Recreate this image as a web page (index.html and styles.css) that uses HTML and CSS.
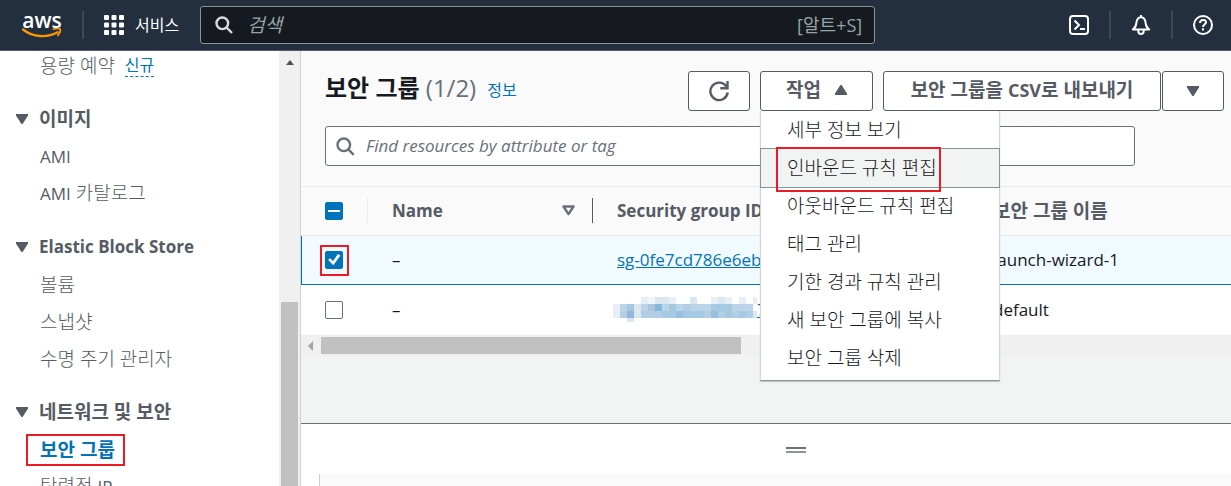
FILE: index.html
```html
<!DOCTYPE html>
<html lang="ko">
<head>
<meta charset="utf-8">
<title>보안 그룹 | EC2</title>
<link rel="stylesheet" href="styles.css">
</head>
<body>
<header class="topbar">
  <a class="logo" href="#" aria-label="AWS">
    <span class="logo-text">aws</span>
    <svg class="logo-smile" viewBox="0 0 40 10" aria-hidden="true"><path d="M1 1.5C11 9.5 25 10 35.5 4.2" fill="none" stroke="#ff9900" stroke-width="2.4" stroke-linecap="round"/><path d="M31.5 1.2C34.5.4 37.4.4 38.2 1.2c.7 1-.3 4-2.400 6.200" fill="none" stroke="#ff9900" stroke-width="1.700" stroke-linecap="round"/></svg>
  </a>
  <span class="divider"></span>
  <button class="services" type="button">
    <svg width="20" height="20" viewBox="0 0 20 20" fill="#fff" aria-hidden="true"><rect width="5" height="5" rx="1"/><rect x="7.500" width="5" height="5" rx="1"/><rect x="15" width="5" height="5" rx="1"/><rect y="7.500" width="5" height="5" rx="1"/><rect x="7.500" y="7.500" width="5" height="5" rx="1"/><rect x="15" y="7.500" width="5" height="5" rx="1"/><rect y="15" width="5" height="5" rx="1"/><rect x="7.500" y="15" width="5" height="5" rx="1"/><rect x="15" y="15" width="5" height="5" rx="1"/></svg>
    <span>서비스</span>
  </button>
  <label class="global-search">
    <svg width="18" height="18" viewBox="0 0 18 18" fill="none" stroke="#d5dbdb" stroke-width="2.400" aria-hidden="true"><circle cx="7.300" cy="7.300" r="5.800"/><path d="M11.500 11.500l5.500 5.500"/></svg>
    <input type="text" placeholder="검색" aria-label="검색">
    <span class="shortcut">[알트+S]</span>
  </label>
  <nav class="tools">
    <button type="button" aria-label="CloudShell"><svg width="20" height="20" viewBox="0 0 20 20" fill="none" stroke="#fff" stroke-width="2" aria-hidden="true"><rect x="1" y="1" width="18" height="18" rx="3"/><path d="M5.500 5.500l4.500 4.500-4.500 4.500M11 14h5"/></svg></button>
    <span class="divider"></span>
    <button type="button" aria-label="알림"><svg width="20" height="20" viewBox="0 0 20 20" fill="none" stroke="#fff" stroke-width="2" stroke-linejoin="round" aria-hidden="true"><path d="M10 0v2M1.800 14.500h16.400c-2.700-2-3.200-3.500-3.500-6.200C14.300 4.500 12.800 2.300 10 2.300S5.700 4.500 5.300 8.300C5 11 4.500 12.500 1.800 14.500zM7.300 15v1.300a2.700 2.700 0 0 0 5.400 0V15"/></svg></button>
    <span class="divider"></span>
    <button type="button" aria-label="도움말"><svg width="20" height="20" viewBox="0 0 20 20" fill="none" stroke="#fff" stroke-width="2" aria-hidden="true"><circle cx="10" cy="10" r="9"/><path d="M7 8c0-4 6-4 6-.8 0 2.200-3 2.200-3 4.800M10 13.300v2.200"/></svg></button>
  </nav>
</header>

<div class="shell">
  <aside class="sidebar">
    <nav class="menu-list">
      <ul class="first">
        <li><a href="#">용량 예약</a><a class="new" href="#">신규</a></li>
      </ul>
      <section>
        <h2><span class="tri"></span>이미지</h2>
        <ul>
          <li><a class="latin" href="#">AMI</a></li>
          <li><a href="#"><span class="latin">AMI</span> 카탈로그</a></li>
        </ul>
      </section>
      <section>
        <h2><span class="tri"></span><span class="latin">Elastic Block Store</span></h2>
        <ul>
          <li><a href="#">볼륨</a></li>
          <li><a href="#">스냅샷</a></li>
          <li><a href="#">수명 주기 관리자</a></li>
        </ul>
      </section>
      <section>
        <h2><span class="tri"></span>네트워크 및 보안</h2>
        <ul>
          <li><a class="current marked" href="#">보안 그룹</a></li>
          <li><a href="#">탄력적 <span class="latin">IP</span></a></li>
        </ul>
      </section>
    </nav>
    <div class="vscroll"><span class="vscroll-up"></span><span class="vscroll-thumb"></span></div>
  </aside>

  <main class="content">
    <section class="listing">
      <div class="list-head">
        <div class="title-row">
          <h1>보안 그룹 <span class="count">(1/2)</span></h1>
          <a class="info" href="#">정보</a>
          <div class="actions">
            <button class="btn icon-btn" type="button" aria-label="새로 고침"><svg width="22" height="22" viewBox="0 0 22 22" fill="none" stroke="#545b64" stroke-width="2.400" aria-hidden="true"><path d="M18.300 6.500A8.700 8.700 0 1 0 19.700 12.500M19.500 1v7.200h-7.200"/></svg></button>
            <div class="dropdown">
              <button class="btn action-btn" type="button" aria-expanded="true">작업 <span class="tri up"></span></button>
              <ul class="dropdown-menu" role="menu">
                <li role="menuitem">세부 정보 보기</li>
                <li role="menuitem" class="active"><span class="marked">인바운드 규칙 편집</span></li>
                <li role="menuitem">아웃바운드 규칙 편집</li>
                <li role="menuitem">태그 관리</li>
                <li role="menuitem">기한 경과 규칙 관리</li>
                <li role="menuitem">새 보안 그룹에 복사</li>
                <li role="menuitem">보안 그룹 삭제</li>
              </ul>
            </div>
            <div class="split">
              <button class="btn export-btn" type="button"><span>보안 그룹을 <span class="export-format">CSV</span>로 내보내기</span></button>
              <button class="btn icon-btn" type="button" aria-label="내보내기 옵션"><span class="tri"></span></button>
            </div>
          </div>
        </div>
        <label class="filter">
          <svg width="19" height="19" viewBox="0 0 19 19" fill="none" stroke="#687078" stroke-width="2.400" aria-hidden="true"><circle cx="7.800" cy="7.800" r="6.300"/><path d="M12.300 12.300l5.500 5.500"/></svg>
          <input type="text" placeholder="Find resources by attribute or tag" aria-label="Find resources by attribute or tag">
        </label>
      </div>
      <table class="grid">
        <colgroup><col class="c-check"><col class="c-name"><col class="c-id"><col></colgroup>
        <thead>
          <tr>
            <th class="check"><span class="cell"><input class="box mixed" type="checkbox" aria-label="모두 선택"></span></th>
            <th><span class="cell">Name <svg width="13" height="11" viewBox="0 0 13 11" fill="none" stroke="#687078" stroke-width="2.400" stroke-linejoin="round" aria-hidden="true"><path d="M1.500 1.500h10l-5 7.600z"/></svg></span></th>
            <th><span class="cell">Security group ID</span></th>
            <th><span class="cell korean">보안 그룹 이름</span></th>
          </tr>
        </thead>
        <tbody>
          <tr class="selected">
            <td class="check"><span class="marked"><input class="box" type="checkbox" checked aria-label="launch-wizard-1"></span></td>
            <td>–</td>
            <td><a href="#">sg-0fe7cd786e6eb</a></td>
            <td>launch-wizard-1</td>
          </tr>
          <tr>
            <td class="check"><input class="box" type="checkbox" aria-label="default"></td>
            <td>–</td>
            <td><div class="masked">
              <svg width="144" height="25" viewBox="0 0 144 25" shape-rendering="crispEdges" aria-hidden="true">
                <g fill="#e7eef6"><path d="M0 7h7v14H0zM28 0h7v7h-7zM56 0h7v7h-7zM98 0h7v7h-7zM112 0h7v7h-7zM126 0h7v7h-7zM140 0h4v7h-4z"/></g>
                <g fill="#d9e7f1"><path d="M42 0h14v7H42zM77 0h7v7h-7zM105 0h7v7h-7zM21 7h7v14h-7zM14 21h7v4h-7zM140 14h4v7h-4z"/></g>
                <path fill="#f0f5fa" d="M35 0h7v7h-7z"/>
                <path fill="#bbd4ea" d="M7 7h7v7H7zM28 7h7v7h-7zM49 7h7v7h-7zM63 7h7v7h-7zM77 7h21v7H77zM119 7h21v7h-21z"/>
                <path fill="#a5c8e3" d="M14 7h7v7h-7zM56 7h7v7h-7zM98 7h21v7H98zM49 14h14v7H49zM70 14h21v7H70zM112 14h7v7h-7zM126 14h7v7h-7z"/>
                <path fill="#b1cee5" d="M7 14h7v7H7zM28 14h21v7H28zM91 14h7v7h-7zM105 14h7v7h-7zM119 14h7v7h-7zM133 14h7v7h-7zM70 7h7v7h-7z"/>
                <path fill="#b1c4df" d="M35 7h7v7h-7z"/>
                <path fill="#84b7dc" d="M42 7h7v7h-7z"/>
                <path fill="#92b5d9" d="M14 14h7v7h-7z"/>
                <path fill="#98c0de" d="M63 14h7v7h-7zM98 14h7v7h-7z"/>
              </svg><a href="#">7</a></div></td>
            <td>default</td>
          </tr>
        </tbody>
      </table>
      <div class="hscroll"><span class="hscroll-left"></span><span class="hscroll-thumb"></span></div>
    </section>
    <section class="split-panel">
      <span class="handle"></span>
      <div class="detail"></div>
    </section>
  </main>
</div>
</body>
</html>
```
FILE: styles.css
```css
* { box-sizing: border-box; }
body {
  margin: 0;
  height: 100vh;
  display: flex;
  flex-direction: column;
  overflow: hidden;
  font: 17px/24px "Open Sans", "Noto Sans CJK KR", sans-serif;
  color: #16191f;
  background: #fff;
}
button, input { font: inherit; color: inherit; }
button { cursor: pointer; }
ul { list-style: none; margin: 0; padding: 0; }
h1, h2 { margin: 0; }
a { color: #0073bb; }
svg { flex: none; }

/* Hangul runs are set at 19px, Latin runs at 17px */
.latin { font-size: 17px; }
.korean { font-size: 19px; }

/* Top bar */
.topbar {
  flex: none;
  display: flex;
  align-items: center;
  height: 51px;
  background: #232f3e;
  border-bottom: 1px solid #545b64;
  color: #fff;
}
.logo { display: flex; flex-direction: column; width: 40px; margin-left: 22px; color: #fff; text-decoration: none; }
.logo-text { font-size: 21px; line-height: 16px; text-align: center; font-weight: 600; }
.logo-smile { width: 40px; height: 10px; }
.divider { width: 2px; height: 28px; background: #414750; }
.logo + .divider { margin-left: 20px; }
.services { display: flex; align-items: center; gap: 11px; margin-left: 20px; padding: 0; border: 0; background: none; font-size: 16px; }
.global-search {
  flex: 0 1 675px;
  display: flex;
  align-items: center;
  height: 38px;
  margin-left: 21px;
  padding: 0 12px 0 14px;
  background: #16191f;
  border: 1px solid #879596;
  border-radius: 3px;
}
.global-search input { flex: 1; min-width: 0; padding: 0 14px; border: 0; outline: 0; background: none; font-size: 19px; }
.global-search input::placeholder { color: #95a5a6; font-style: italic; opacity: 1; }
.shortcut { color: #95a5a6; font-size: 18px; }
.tools { display: flex; align-items: center; gap: 20px; margin: 0 18px 0 auto; }
.tools button { display: flex; padding: 0; border: 0; background: none; }

/* Shell */
.shell { flex: 1; min-height: 0; display: flex; }
.sidebar { flex: none; width: 300px; display: flex; overflow: hidden; color: #545b64; }
.menu-list { flex: 1; font-size: 19px; }
.menu-list .first { margin-top: -4px; }
.menu-list section { margin-top: 16px; }
.menu-list h2 { display: flex; align-items: center; gap: 11px; height: 38px; padding-left: 16px; font-size: 19px; }
.menu-list li { display: flex; align-items: center; height: 37px; padding-left: 40px; font-weight: 300; }
.menu-list li .latin { font-weight: 400; }
.menu-list a { color: #545b64; text-decoration: none; }
.menu-list .current { color: #0073bb; font-weight: bold; }
.menu-list .new { margin-left: 10px; color: #0073bb; font-size: 16px; font-weight: 400; line-height: 22px; border-bottom: 1px dashed #0073bb; }
.tri { flex: none; width: 12px; height: 10px; background: #545b64; clip-path: polygon(0 0, 100% 0, 100% 15%, 55% 100%, 45% 100%, 0 15%); }
.tri.up { transform: rotate(180deg); }

.vscroll { width: 21px; background: #f0f0f0; display: flex; flex-direction: column; align-items: center; }
.vscroll-up { margin-top: 9px; border: 4px solid transparent; border-top: 0; border-bottom: 5px solid #505050; }
.vscroll-thumb { flex: 1; width: 17px; margin-top: 237px; background: #c1c1c1; }

/* Red marker frame around an item */
.marked { position: relative; }
.marked::after { content: ""; position: absolute; border: 2px solid #ed1c24; pointer-events: none; }
.menu-list .marked::after { inset: -4px -10px -4px -14px; }
.dropdown-menu .marked::after { inset: -9px -4px -12px -11px; }
.check .marked { display: block; width: 18px; height: 18px; }
.check .marked::after { inset: -6px -6px -7px -5px; }

/* Content */
.content { flex: 1; min-width: 0; display: flex; flex-direction: column; border-left: 1px solid #d0d3d3; }
.listing { flex: 0 0 373px; background: #f2f3f3; border-bottom: 1px solid #687078; }
.list-head { padding: 20px 7px 20px 24px; background: #fafafa; border-bottom: 1px solid #eaeded; }
.title-row { display: flex; align-items: flex-start; }
h1 { font-size: 24px; line-height: 34px; white-space: nowrap; }
.count { font-weight: normal; color: #687078; }
.info { margin-left: 11px; font-size: 16px; line-height: 38px; text-decoration: none; white-space: nowrap; }
.actions { display: flex; gap: 10px; margin-left: auto; }
.btn {
  display: flex;
  align-items: center;
  justify-content: center;
  gap: 14px;
  height: 40px;
  padding: 0 20px 2px;
  border: 1px solid #545b64;
  border-radius: 3px;
  background: #fff;
  color: #545b64;
  font-weight: bold;
  font-size: 19px;
  line-height: 24px;
  white-space: nowrap;
}
.icon-btn { width: 62px; padding: 0; }
.action-btn { width: 113px; }
.export-btn { width: 278px; }
.export-format { font-size: 18px; }
.split { display: flex; gap: 1px; }
.dropdown { position: relative; }
.dropdown-menu {
  position: absolute;
  top: 40px;
  left: 0;
  z-index: 2;
  width: 240px;
  padding-bottom: 3px;
  background: #fff;
  border: 1px solid #d0d5d5;
  border-top: 0;
  border-bottom-color: #879596;
  box-shadow: 0 1px 1px rgba(0, 28, 36, 0.2);
  font-size: 19px;
  font-weight: 300;
}
.dropdown-menu li { display: flex; align-items: center; height: 38px; padding: 0 0 1px 26px; line-height: 24px; white-space: nowrap; }
.dropdown-menu .active { background: #f2f3f3; outline: 1px solid #879596; }

.filter {
  display: flex;
  align-items: center;
  gap: 11px;
  width: 810px;
  max-width: 100%;
  height: 40px;
  margin-top: 15px;
  padding: 0 10px;
  background: #fff;
  border: 1px solid #687078;
  border-radius: 3px;
}
.filter input { flex: 1; padding: 0; border: 0; outline: 0; background: none; }
.filter input::placeholder { color: #687078; font-style: italic; opacity: 1; }

.grid { width: 100%; table-layout: fixed; border-collapse: collapse; background: #fff; }
.c-check { width: 67px; }
.c-name { width: 225px; }
.c-id { width: 376px; }
.grid th { height: 48px; padding: 0; background: #fafafa; border-bottom: 1px solid #eaeded; color: #545b64; text-align: left; }
.cell { display: flex; align-items: center; justify-content: space-between; height: 25px; padding: 0 17px 0 24px; border-right: 1px solid #eaeded; white-space: nowrap; }
.grid th:nth-child(2) .cell { border-color: #545b64; }
.grid th:last-child .cell { border: 0; }
.grid td { height: 51px; padding: 0 0 0 24px; white-space: nowrap; }
.grid .selected td { height: 49px; background: #f1faff; border-bottom: 1px solid #0073bb; }
.grid .selected td:first-child { box-shadow: inset 1px 0 #0073bb; }
.masked { display: flex; align-items: center; margin-left: -4px; }

.box { appearance: none; display: block; flex: none; width: 18px; height: 18px; margin: 0; border: 1px solid #687078; border-radius: 2px; background: #fff; }
.box.mixed, .box:checked { display: grid; place-items: center; background: #0073bb; border-color: #0073bb; }
.box.mixed::before { content: ""; width: 12px; height: 2px; background: #fff; }
.box:checked::before { content: ""; width: 14px; height: 12px; background: #fff; clip-path: polygon(8% 52%, 24% 40%, 42% 65%, 78% 4%, 96% 17%, 45% 98%); }

.hscroll { display: flex; align-items: center; gap: 8px; height: 21px; padding-left: 7px; background: #f0f0f0; }
.hscroll-left { border: 5px solid transparent; border-left: 0; border-right-color: #a3a3a3; }
.hscroll-thumb { width: 420px; height: 17px; background: #c1c1c1; }

.split-panel { flex: 1; display: flex; flex-direction: column; align-items: flex-end; gap: 21px; padding: 23px 0 0 18px; background: #fff; }
.handle { flex: none; width: 20px; height: 6px; margin-right: 425px; border-top: 2px solid #687078; border-bottom: 2px solid #8d949b; }
.detail { flex: 1; width: 100%; background: #fafafa; border-left: 1px solid #ccc; }
```
